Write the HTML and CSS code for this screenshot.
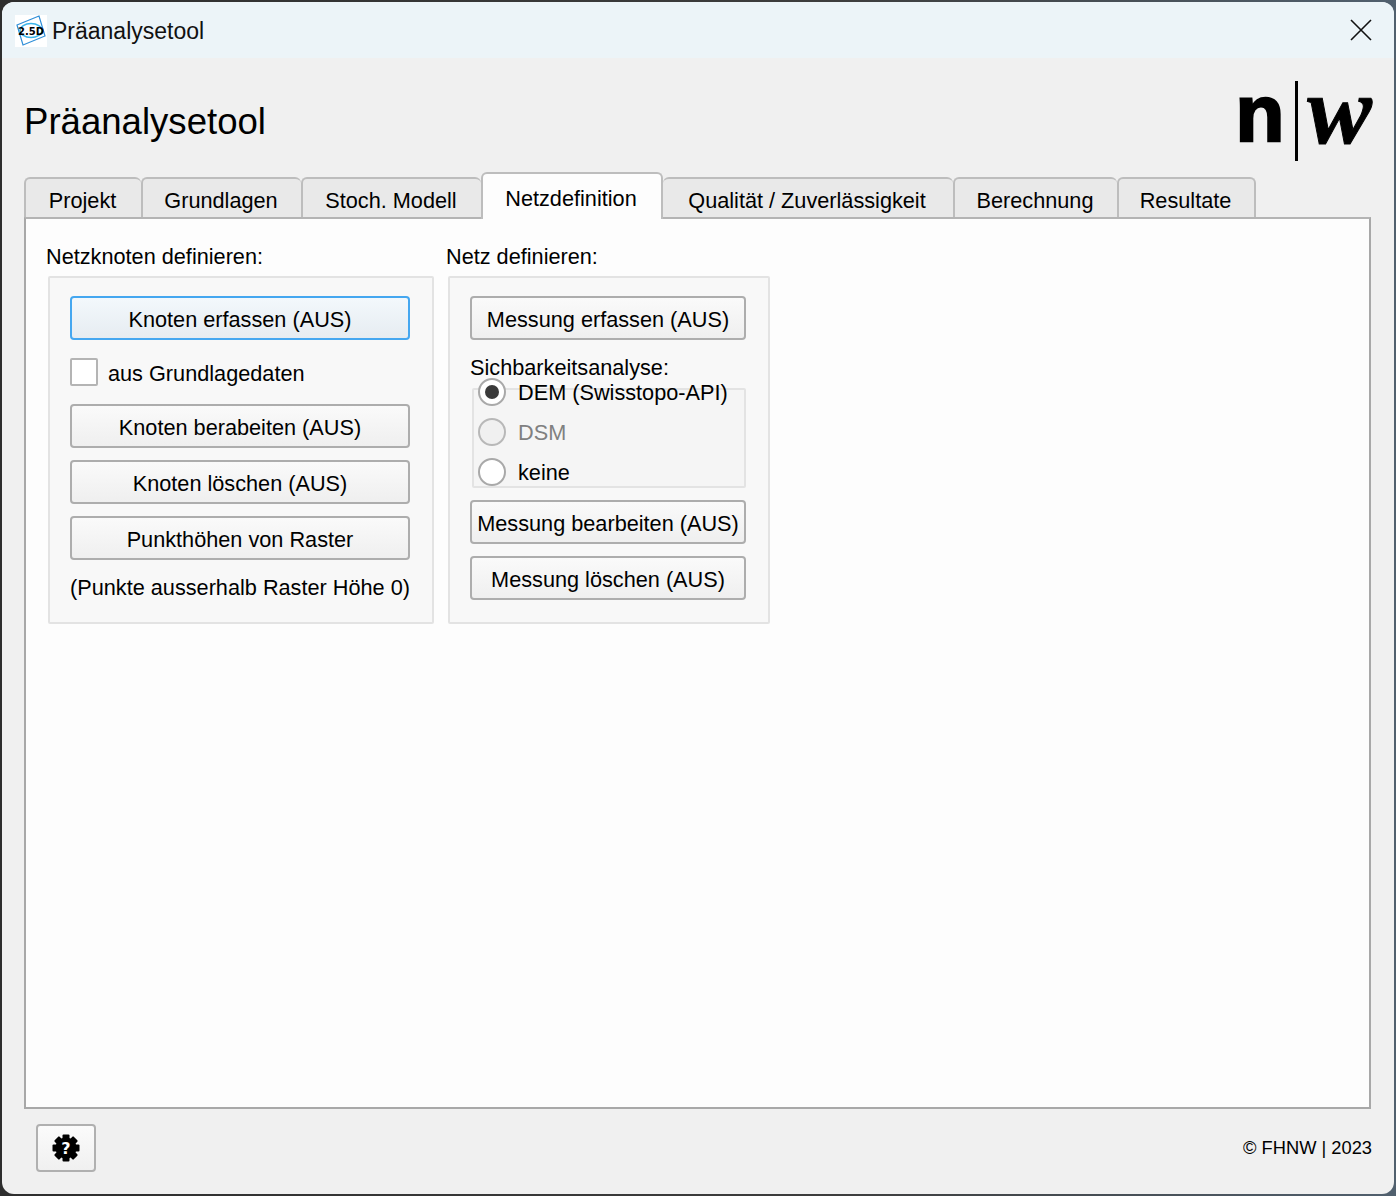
FILE: index.html
```html
<!DOCTYPE html>
<html lang="de">
<head>
  <meta charset="UTF-8">
  <title>Präanalysetool</title>
  <link rel="stylesheet" href="styles.css">
</head>
<body>
  <div class="window">
    <div class="titlebar">
      <svg class="app-icon" width="32" height="32" viewBox="0 0 32 32">
        <rect width="32" height="32" fill="#fff"/>
        <path d="M2 10 L24 1 L30 21 L8 30 Z" fill="none" stroke="#2f8fd8" stroke-width="1.2"/>
        <ellipse cx="16" cy="15.5" rx="11" ry="7" fill="none" stroke="#39b4ea" stroke-width="1.5"/>
        <text x="16" y="20" text-anchor="middle" class="app-icon-text">2.5D</text>
      </svg>
      <span class="titlebar-text">Präanalysetool</span>
      <svg class="close-icon" width="22" height="22" viewBox="0 0 22 22">
        <path d="M1 1 L21 21 M21 1 L1 21" stroke="#111" stroke-width="1.6" fill="none"/>
      </svg>
    </div>

    <div class="header">
      <h1>Präanalysetool</h1>
      <div class="logo">
        <span class="logo-n">n</span>
        <span class="logo-bar"></span>
        <span class="logo-w">w</span>
      </div>
    </div>

    <div class="tabs">
      <div class="tab tab-projekt">Projekt</div>
      <div class="tab tab-grundlagen">Grundlagen</div>
      <div class="tab tab-stoch">Stoch. Modell</div>
      <div class="tab tab-active">Netzdefinition</div>
      <div class="tab tab-qualitaet">Qualität / Zuverlässigkeit</div>
      <div class="tab tab-berechnung">Berechnung</div>
      <div class="tab tab-resultate">Resultate</div>
    </div>

    <div class="panel">
      <div class="column column-left">
        <div class="group-title">Netzknoten definieren:</div>
        <div class="group group-left">
          <button type="button" class="btn btn-focus">Knoten erfassen (AUS)</button>
          <label class="check-row">
            <span class="checkbox"></span>
            <span class="check-text">aus Grundlagedaten</span>
          </label>
          <button type="button" class="btn">Knoten berabeiten (AUS)</button>
          <button type="button" class="btn">Knoten löschen (AUS)</button>
          <button type="button" class="btn">Punkthöhen von Raster</button>
          <div class="note">(Punkte ausserhalb Raster Höhe 0)</div>
        </div>
      </div>

      <div class="column column-right">
        <div class="group-title">Netz definieren:</div>
        <div class="group group-right">
          <button type="button" class="btn">Messung erfassen (AUS)</button>
          <div class="sub-title">Sichbarkeitsanalyse:</div>
          <div class="radio-frame">
            <div class="radio-list">
              <div class="radio-row"><span class="radio radio-on"></span><span class="radio-text">DEM (Swisstopo-API)</span></div>
              <div class="radio-row radio-disabled"><span class="radio"></span><span class="radio-text">DSM</span></div>
              <div class="radio-row"><span class="radio"></span><span class="radio-text">keine</span></div>
            </div>
          </div>
          <button type="button" class="btn btn-after-frame">Messung bearbeiten (AUS)</button>
          <button type="button" class="btn">Messung löschen (AUS)</button>
        </div>
      </div>
    </div>

    <div class="footer">
      <button type="button" class="help-btn">
        <svg width="30" height="30" viewBox="0 0 30 30">
          <g fill="#000">
            <circle cx="15" cy="15" r="10.5"/>
            <rect x="11.5" y="1.5" width="7" height="27" rx="1"/>
            <rect x="11.5" y="1.5" width="7" height="27" rx="1" transform="rotate(45 15 15)"/>
            <rect x="11.5" y="1.5" width="7" height="27" rx="1" transform="rotate(90 15 15)"/>
            <rect x="11.5" y="1.5" width="7" height="27" rx="1" transform="rotate(135 15 15)"/>
          </g>
          <text x="15" y="21" text-anchor="middle" class="help-mark">?</text>
        </svg>
      </button>
      <span class="copyright">© FHNW | 2023</span>
    </div>
  </div>
</body>
</html>
```

FILE: styles.css
```css
* {
  box-sizing: border-box;
}
html, body {
  height: 100%;
}
body {
  margin: 0;
  padding: 2px;
  background: linear-gradient(90deg, #2e2e2e 0%, #3d3d3d 60%, #51606e 100%);
  font-family: "Liberation Sans", Tahoma, sans-serif;
  font-size: 21.7px;
  color: #000;
  overflow: hidden;
}
.window {
  height: 1192px;
  background: #f0f0f0;
  border-radius: 12px;
  overflow: hidden;
  display: flex;
  flex-direction: column;
}
.titlebar {
  height: 56px;
  flex: none;
  background: #ecf4f8;
  display: flex;
  align-items: center;
  padding: 0 22px 0 13px;
}
.app-icon {
  flex: none;
  margin-top: 2px;
}
.app-icon-text {
  font-family: "DejaVu Sans", sans-serif;
  font-size: 10px;
  font-weight: 700;
  fill: #000;
}
.titlebar-text {
  margin-left: 5px;
  padding-top: 2px;
  font-size: 23px;
  color: #111;
}
.close-icon {
  margin-left: auto;
  margin-top: -1px;
}
.header {
  height: 113px;
  flex: none;
  padding: 0 22px;
  display: flex;
  align-items: center;
  justify-content: space-between;
}
h1 {
  margin: 16px 0 0;
  font-size: 36.6px;
  font-weight: 400;
  line-height: 1;
}
.logo {
  display: flex;
  align-items: center;
  height: 80px;
  margin-top: 12px;
}
.logo-n {
  font-family: "Liberation Sans", sans-serif;
  font-weight: 700;
  font-size: 80px;
  line-height: 80px;
  margin-top: -14px;
  -webkit-text-stroke: 2.5px #000;
}
.logo-bar {
  width: 3px;
  height: 80px;
  background: #000;
  margin: 0 9px 0 11px;
}
.logo-w {
  font-family: "Liberation Serif", serif;
  font-style: italic;
  font-weight: 700;
  font-size: 97px;
  line-height: 80px;
  margin-top: -20px;
  -webkit-text-stroke: 1px #000;
}
.tabs {
  display: flex;
  align-items: flex-end;
  height: 46px;
  flex: none;
  padding: 0 22px;
}
.tab {
  height: 40px;
  background: #e9e9e9;
  border: 2px solid #bdbdbd;
  border-bottom: none;
  border-right-width: 0;
  border-radius: 6px 6px 0 0;
  display: flex;
  align-items: center;
  justify-content: center;
  padding: 6px 2px 0 0;
  white-space: nowrap;
}
.tab-projekt { width: 117px; }
.tab-grundlagen { width: 160px; }
.tab-stoch { width: 180px; }
.tab-active {
  width: 182px;
  background: #fdfdfd;
  border-right-width: 2px;
  padding: 5px 2px 0 0;
  position: relative;
  margin-bottom: -2px;
  height: 47px;
  z-index: 1;
}
.tab-qualitaet { width: 290px; border-left: none; }
.tab-berechnung { width: 164px; }
.tab-resultate { width: 139px; border-right-width: 2px; }
.panel {
  flex: none;
  height: 892px;
  margin: 0 23px 0 22px;
  background: #fdfdfd;
  border: 2px solid #a8a8a8;
  border-top-color: #b4b4b4;
  padding: 22px 20px 0 20px;
  display: flex;
}
.column {
  display: flex;
  flex-direction: column;
}
.column-left {
  width: 400px;
}
.group-title {
  line-height: 32px;
  height: 35px;
}
.group {
  margin-left: 2px;
  background: #f8f8f8;
  border: 2px solid #e3e3e3;
  border-radius: 2px;
  padding: 18px 22px 0 20px;
  height: 348px;
  display: flex;
  flex-direction: column;
}
.group-left {
  width: 386px;
}
.group-right {
  width: 322px;
}
.btn {
  height: 44px;
  flex: none;
  border: 2px solid #adadad;
  border-radius: 4px;
  background: linear-gradient(180deg, #fafafa 0%, #efefef 100%);
  font: inherit;
  color: #000;
  padding: 4px 0 0;
  margin-bottom: 12px;
  white-space: nowrap;
}
.btn-focus {
  border-color: #45a7f0;
  background: linear-gradient(180deg, #f3f8fc 0%, #e6ecf1 100%);
  margin-bottom: 18px;
}
.check-row {
  height: 28px;
  display: flex;
  align-items: center;
  gap: 10px;
  margin-bottom: 18px;
}
.check-text {
  padding-top: 4px;
}
.checkbox {
  width: 28px;
  height: 28px;
  background: #fff;
  border: 2px solid #b4b4b4;
  border-radius: 2px;
}
.note {
  line-height: 30px;
  margin-top: 1px;
  white-space: nowrap;
}
.sub-title {
  line-height: 24px;
  height: 33px;
  margin-top: 4px;
  margin-bottom: -1px;
  white-space: nowrap;
}
.radio-frame {
  height: 100px;
  margin-left: 2px;
  border: 2px solid #e3e3e3;
  border-radius: 2px;
  background: #f5f5f5;
}
.radio-list {
  margin-top: -13px;
  padding-left: 4px;
  display: flex;
  flex-direction: column;
  gap: 10px;
}
.radio-row {
  height: 30px;
  display: flex;
  align-items: center;
  gap: 12px;
  line-height: 24px;
  white-space: nowrap;
}
.radio-text {
  padding-top: 2px;
}
.radio {
  width: 28px;
  height: 28px;
  flex: none;
  background: #fff;
  border: 2px solid #a9a9a9;
  border-radius: 50%;
  position: relative;
}
.radio-on::after {
  content: "";
  position: absolute;
  left: 5px;
  top: 5px;
  width: 14px;
  height: 14px;
  border-radius: 50%;
  background: #3a3a3a;
}
.radio-disabled {
  color: #808080;
}
.radio-disabled .radio {
  background: #f0f0f0;
  border-color: #b8b8b8;
}
.btn-after-frame {
  margin-top: 12px;
}
.footer {
  flex: 1;
  display: flex;
  align-items: center;
  justify-content: space-between;
  padding: 0 22px 7px 34px;
}
.help-btn {
  width: 60px;
  height: 48px;
  padding: 0;
  border: 2px solid #b0b0b0;
  border-radius: 4px;
  background: linear-gradient(180deg, #fbfbfb 0%, #f0f0f0 100%);
  display: flex;
  align-items: center;
  justify-content: center;
}
.help-mark {
  font-family: "DejaVu Sans", sans-serif;
  font-size: 16px;
  font-weight: 700;
  fill: #fff;
}
.copyright {
  font-size: 18.3px;
}
```
